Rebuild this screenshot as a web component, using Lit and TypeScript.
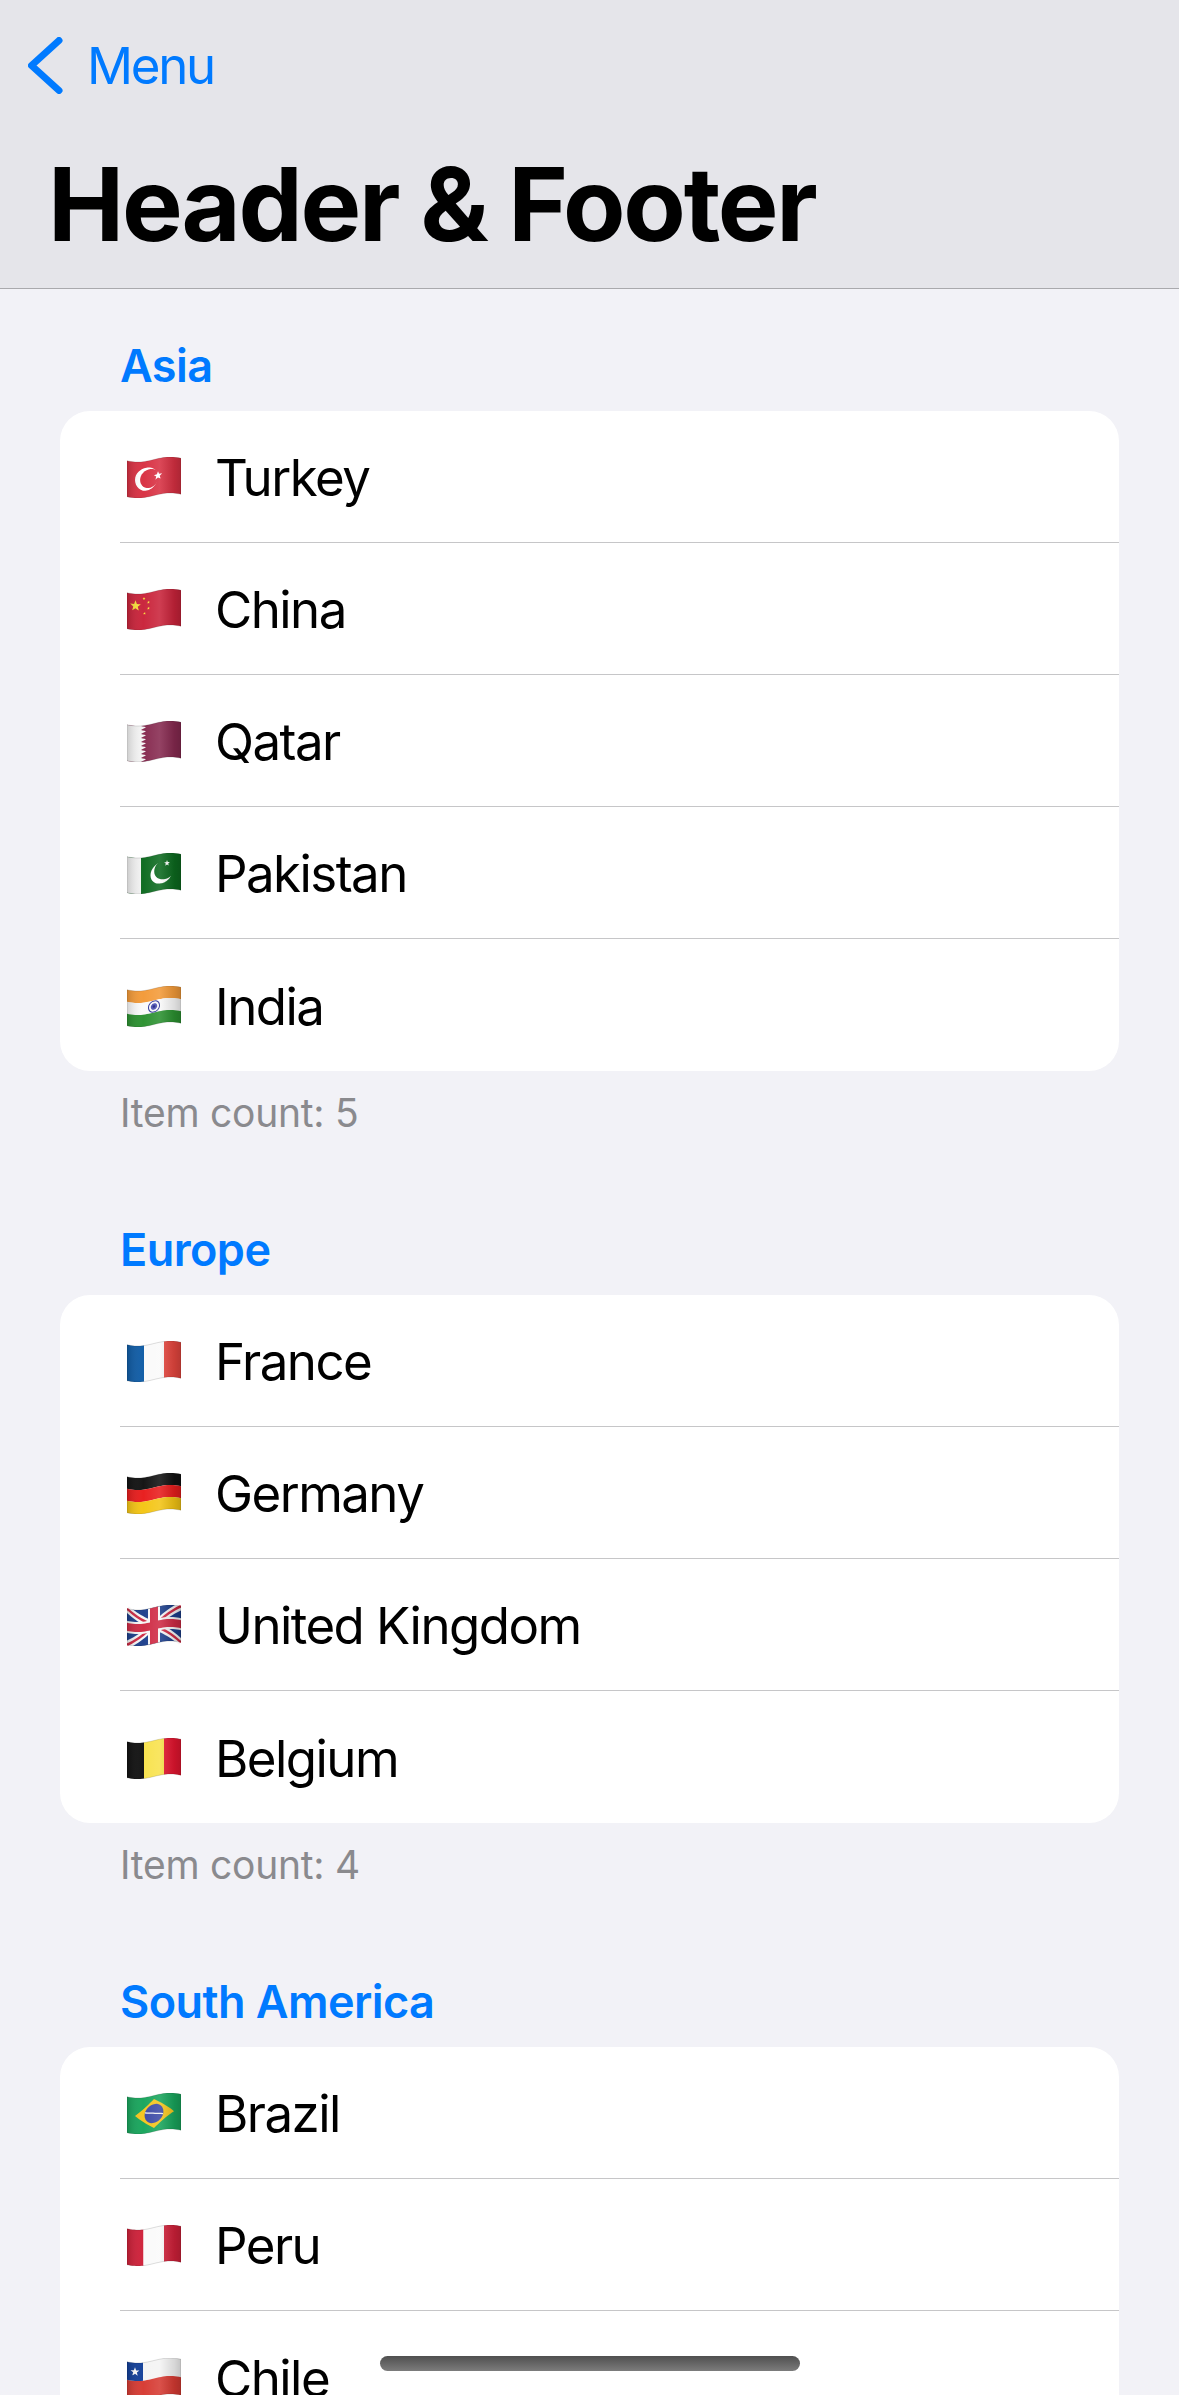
import { LitElement, html, css, svg } from "lit";
import { customElement } from "lit/decorators.js";

type Pt = [number, number];
const W = 54, H = 36;
const offset = (x: number) => 2.5 + 2.5 * Math.cos((Math.PI * (x / W - 0.2)) / 0.6);
const warp = ([x, y]: Pt): Pt => [x, y + offset(x)];

function d(points: Pt[]): string {
  const out: Pt[] = [];
  points.forEach((p, i) => {
    const q = points[(i + 1) % points.length];
    const n = Math.max(1, Math.ceil(Math.abs(q[0] - p[0]) / 2));
    for (let k = 0; k < n; k++) out.push(warp([p[0] + ((q[0] - p[0]) * k) / n, p[1] + ((q[1] - p[1]) * k) / n]));
  });
  return "M" + out.map((p) => p[0].toFixed(2) + " " + p[1].toFixed(2)).join("L") + "Z";
}
const shape = (points: Pt[], fill: string) => svg`<path d=${d(points)} fill=${fill}></path>`;
const rect = (x: number, y: number, w: number, h: number, fill: string) =>
  shape([[x, y], [x + w, y], [x + w, y + h], [x, y + h]], fill);
const circlePts = (cx: number, cy: number, r: number, from = 0, to = 360): Pt[] => {
  const pts: Pt[] = [];
  for (let a = from; a <= to; a += 12) pts.push([cx + r * Math.cos((a * Math.PI) / 180), cy + r * Math.sin((a * Math.PI) / 180)]);
  return pts;
};
const circle = (cx: number, cy: number, r: number, fill: string) => shape(circlePts(cx, cy, r), fill);
const star = (cx: number, cy: number, r: number, fill: string, rot = -90) => {
  const pts: Pt[] = [];
  for (let i = 0; i < 10; i++) {
    const rr = i % 2 ? r * 0.42 : r;
    const a = ((rot + i * 36) * Math.PI) / 180;
    pts.push([cx + rr * Math.cos(a), cy + rr * Math.sin(a)]);
  }
  return shape(pts, fill);
};
const vert = (a: string, b: string, c: string, x1: number, x2: number) => [
  rect(0, 0, x1, H, a), rect(x1, 0, x2 - x1, H, b), rect(x2, 0, W - x2, H, c),
];
const horiz = (a: string, b: string, c: string) => [
  rect(0, 0, W, 12, a), rect(0, 12, W, 12, b), rect(0, 24, W, 12, c),
];
const line = (x1: number, y1: number, x2: number, y2: number, t: number, fill: string) => {
  const l = Math.hypot(x2 - x1, y2 - y1);
  const nx = (-(y2 - y1) / l) * t / 2, ny = ((x2 - x1) / l) * t / 2;
  return shape([[x1 + nx, y1 + ny], [x2 + nx, y2 + ny], [x2 - nx, y2 - ny], [x1 - nx, y1 - ny]], fill);
};

const FLAGS: Record<string, () => unknown[]> = {
  Turkey: () => [
    rect(0, 0, W, H, "#d83042"),
    circle(19.5, 18, 11.5, "#fff"), circle(22.5, 18, 9.4, "#d83042"),
    star(31, 17, 4.4, "#fff"),
  ],
  China: () => [
    rect(0, 0, W, H, "#c9233a"),
    star(8.5, 12, 5.6, "#f9e23c"),
    star(17, 5, 1.5, "#f9e23c"), star(21.5, 9.5, 1.5, "#f9e23c"),
    star(21.5, 15.5, 1.5, "#f9e23c"), star(17.5, 20, 1.5, "#f9e23c"),
  ],
  Qatar: () => {
    const z: Pt[] = [[0, 0], [14, 0]];
    const n = 9;
    for (let i = 0; i < n; i++) { z.push([19, ((i + 0.5) * H) / n]); z.push([14, ((i + 1) * H) / n]); }
    z.push([0, H]);
    return [rect(0, 0, W, H, "#86294f"), shape(z, "#f4f4f4")];
  },
  Pakistan: () => [
    rect(0, 0, W, H, "#0c6a1f"), rect(0, 0, 14, H, "#f2f2f2"),
    circle(34, 19, 10.5, "#fff"), circle(37, 16, 9.8, "#0c6a1f"),
    star(40, 10, 3, "#fff"),
  ],
  India: () => [
    ...horiz("#f39a38", "#fafafa", "#2b9130"),
    circle(27, 18, 6, "#2a2f96"), circle(27, 18, 5, "#fafafa"), circle(27, 18, 3.2, "#4a4fb0"), circle(27, 18, 1.3, "#1d2280"),
  ],
  France: () => vert("#0f5ca6", "#fafafa", "#e5463e", 17, 37),
  Germany: () => horiz("#111", "#e81c1c", "#f4c514"),
  "United Kingdom": () => [
    rect(0, 0, W, H, "#1c3f8c"),
    line(0, 0, W, H, 7, "#f6f6f6"), line(W, 0, 0, H, 7, "#f6f6f6"),
    line(0, 0, W, H, 2.4, "#cf2a44"), line(W, 0, 0, H, 2.4, "#cf2a44"),
    rect(21, 0, 12, H, "#f6f6f6"), rect(0, 12, W, 12, "#f6f6f6"),
    rect(23, 0, 8, H, "#cf2a44"), rect(0, 14, W, 8, "#cf2a44"),
  ],
  Belgium: () => vert("#111", "#f8e24c", "#e3152f", 17, 37),
  Brazil: () => [
    rect(0, 0, W, H, "#18a55c"),
    shape([[8, 18], [27, 3.5], [47, 18], [27, 32.5]], "#f5c51c"),
    circle(27, 18, 9.4, "#3c4aa6"),
    line(18, 15.5, 36, 20, 1.2, "#f4f4f4"),
  ],
  Peru: () => vert("#cf2039", "#fafafa", "#cf2039", 16.5, 37),
  Chile: () => [
    rect(0, 0, W, 18, "#f4f4f4"), rect(0, 18, W, 18, "#d63a32"),
    rect(0, 0, 16, 18, "#123f99"), star(8, 9, 4.6, "#fff"),
  ],
};

const OUTLINE: Pt[] = [[0, 0], [W, 0], [W, H], [0, H]];

const flag = (name: string) => svg`
  <svg class="flag" viewBox="0 0 54 41" width="54" height="41" aria-hidden="true">
    <defs>
      <linearGradient id="sheen" x1="0" x2="1" y1="0" y2="0">
        <stop offset="0" stop-color="#000" stop-opacity=".16"></stop>
        <stop offset=".3" stop-color="#fff" stop-opacity=".02"></stop>
        <stop offset=".6" stop-color="#fff" stop-opacity=".12"></stop>
        <stop offset=".88" stop-color="#000" stop-opacity=".12"></stop>
        <stop offset="1" stop-color="#000" stop-opacity=".2"></stop>
      </linearGradient>
    </defs>
    ${FLAGS[name]()}
    <path d=${d(OUTLINE)} fill="url(#sheen)" stroke="#000" stroke-opacity=".22" stroke-width=".6"></path>
  </svg>`;

const SECTIONS = [
  { title: "Asia", items: ["Turkey", "China", "Qatar", "Pakistan", "India"] },
  { title: "Europe", items: ["France", "Germany", "United Kingdom", "Belgium"] },
  { title: "South America", items: ["Brazil", "Peru", "Chile"] },
];

@customElement("app-root")
export class AppRoot extends LitElement {
  static styles = css`
    :host {
      display: block;
      position: relative;
      height: 2395px;
      overflow: hidden;
      background: #f2f2f7;
      font-family: Inter, "Liberation Sans", sans-serif;
      color: #000;
    }
    .nav {
      height: 289px;
      box-sizing: border-box;
      background: #e5e5ea;
      border-bottom: 1px solid #a9a9ad;
      padding: 37px 0 0 28px;
    }
    .back {
      display: flex;
      align-items: center;
      gap: 24px;
      height: 57px;
      color: #007aff;
      font-size: 51px;
      line-height: 57px;
      letter-spacing: -2.3px;
    }
    .back svg { display: block; flex: none; }
    h1 {
      margin: 0;
      padding: 50px 0 0 20px;
      font-size: 102px;
      line-height: 120px;
      font-weight: 700;
      letter-spacing: -2.25px;
      white-space: nowrap;
    }
    .list { padding-top: 31px; }
    .section { margin-bottom: 72px; }
    .head {
      margin: 0;
      padding-left: 120px;
      height: 91px;
      box-sizing: border-box;
      padding-top: 19px;
      color: #007aff;
      font-size: 45px;
      line-height: 54px;
      font-weight: 600;
      letter-spacing: -0.55px;
    }
    .card {
      margin: 0 60px;
      background: #fff;
      border-radius: 30px;
      overflow: hidden;
    }
    .row {
      height: 132px;
      margin-left: 60px;
      box-sizing: border-box;
      display: flex;
      align-items: center;
      gap: 34px;
      padding: 2px 0 0 7px;
      border-bottom: 1px solid #c6c6c8;
      font-size: 51px;
      letter-spacing: -1.55px;
    }
    .row:last-child { border-bottom: 0; }
    .flag { display: block; flex: none; }
    .foot {
      margin: 0;
      padding: 24px 0 0 120px;
      height: 61px;
      box-sizing: border-box;
      color: #8a8a8e;
      font-size: 39px;
      line-height: 36px;
      letter-spacing: -0.25px;
    }
    .home {
      position: absolute;
      left: 380px;
      top: 2356px;
      width: 420px;
      height: 15px;
      border-radius: 8px;
      background: linear-gradient(#4f4f4f, #7c7c7c);
    }
  `;

  render() {
    return html`
      <div class="nav">
        <div class="back">
          <svg width="35" height="57" viewBox="0 0 35 57" fill="none" aria-hidden="true">
            <path d="M31 3.5 3.5 28.5 31 53.5" stroke="#007aff" stroke-width="7" stroke-linecap="round" stroke-linejoin="round"></path>
          </svg>
          <span>Menu</span>
        </div>
        <h1>Header &amp; Footer</h1>
      </div>
      <div class="list">
        ${SECTIONS.map(
          (s) => html`
            <section class="section">
              <h2 class="head">${s.title}</h2>
              <div class="card">
                ${s.items.map((i) => html`<div class="row">${flag(i)}<span>${i}</span></div>`)}
              </div>
              <p class="foot">Item count: ${s.items.length}</p>
            </section>
          `
        )}
      </div>
      <div class="home"></div>
    `;
  }
}
